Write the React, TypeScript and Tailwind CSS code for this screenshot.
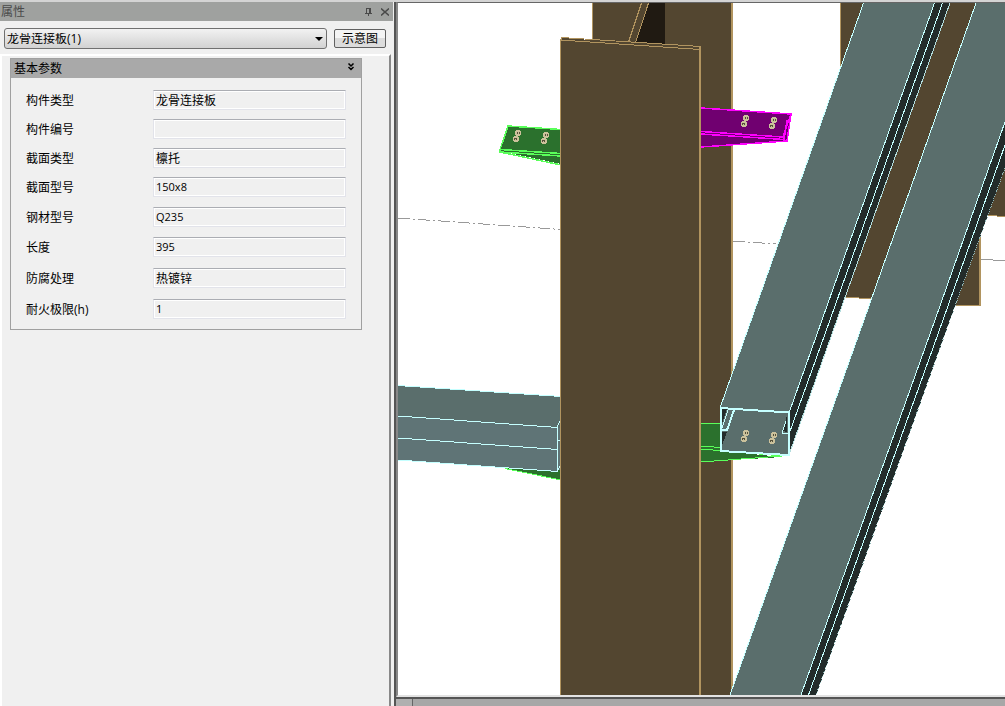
import { useState } from "react";

const fields = [
  { id: "kind", label: "构件类型", value: "龙骨连接板" },
  { id: "number", label: "构件编号", value: "" },
  { id: "section", label: "截面类型", value: "檩托" },
  { id: "sectionModel", label: "截面型号", value: "150x8" },
  { id: "steel", label: "钢材型号", value: "Q235" },
  { id: "length", label: "长度", value: "395" },
  { id: "coating", label: "防腐处理", value: "热镀锌" },
  { id: "fire", label: "耐火极限(h)", value: "1" },
];

// pairs of bolts on the connection plates
const bolts = [
  [517, 136], [545, 138], [745, 121], [773, 123], [745, 436], [773, 438],
];

function TitleBar() {
  return (
    <div className="flex h-[19px] items-center bg-[#9fa19f] pr-1 text-[#4a4a4a]">
      <span className="flex-1 pl-px text-xs leading-none">属性</span>
      <button aria-label="固定" className="mr-2 h-2 w-2">
        <svg viewBox="0 0 8 8" className="h-2 w-2" fill="none" stroke="currentColor" shapeRendering="crispEdges">
          <path d="M1.5 5V.5H5.5V5M4.5 0V5M0 5.5H7M3.5 6V8" />
        </svg>
      </button>
      <button aria-label="关闭" className="h-2 w-2">
        <svg viewBox="0 0 8 8" className="h-2 w-2" stroke="currentColor" strokeWidth="1.5">
          <path d="M0 .5L8 7.5M8 .5L0 7.5" />
        </svg>
      </button>
    </div>
  );
}

function Properties() {
  const [open, setOpen] = useState(true);

  return (
    <fieldset className="min-w-0 border border-[#a0a0a0]">
      <div className="flex h-[19px] items-center bg-[#a9a9a9] pl-[3px] pr-[6px]">
        <h2 className="flex-1 pt-px text-xs leading-4">基本参数</h2>
        <button aria-label="折叠" className="-mt-1 h-2 w-2" onClick={() => setOpen(!open)}>
          <svg viewBox="0 0 7 8" className="h-2 w-2" fill="none" stroke="#000" strokeWidth="1.5">
            <path d="M1 .5L3.5 3L6 .5M1 4L3.5 6.5L6 4" />
          </svg>
        </button>
      </div>
      {open && (
        <div className="grid grid-rows-[29px_29px_29px_30px_30px_31px_31px_20px] pb-[10px] pl-[15px] pr-[15px] pt-3">
          {fields.map((f) => (
            <div key={f.id} className="flex items-start">
              <label htmlFor={f.id} className="w-[127px] text-xs leading-[22px]">{f.label}</label>
              <input
                id={f.id}
                readOnly
                defaultValue={f.value}
                className={`h-5 min-w-0 flex-1 border border-[#e2e3ea] border-t-[#abadb3] bg-[#f0f0f0] px-[2px] shadow-[inset_0_0_0_1px_#fff] outline-none ${/^[\x00-\x7f]*$/.test(f.value) ? "pb-[2px] text-[11px]" : "text-xs"}`}
              />
            </div>
          ))}
        </div>
      )}
    </fieldset>
  );
}

function Bolt({ x, y }: { x: number; y: number }) {
  return (
    <g transform={`translate(${x} ${y})`} shapeRendering="crispEdges">
      <path d="M-1-6h4v1h1v4h-1v1h-4v-1h-1v-4h1zM-3 0h4v1h1v4h-1v1h-4v-1h-1v-4h1z" fill="#cbc19b" />
      <path d="M.5-4v2M2.500-4v2M-2.500 2v2M-.5 2v2M-2 2.500h2" stroke="#555039" />
    </g>
  );
}

function Scene() {
  return (
    <svg
      role="img"
      aria-label="三维视图"
      viewBox="398 3 607 692"
      preserveAspectRatio="xMinYMin slice"
      className="h-full w-full"
      shapeRendering="crispEdges"
      fill="none"
    >
      {/* axis line */}
      <path d="M398 218L561 229.500M733 241L776 244" stroke="#999" strokeDasharray="12 3 2 3" />

      {/* columns at the back right */}
      <path d="M841 3H981V306L956 305L930 299H872L841 297Z" fill="#534630" />
      <path d="M981 3H1005V216L981 215Z" fill="#534630" />
      <path d="M840.500 3V68M845 297.500L872 298.500M956 305L981 306M988 215.500L1005 216.500" stroke="#b1945f" />
      <path d="M980 236V306" stroke="#b1945f" strokeWidth="2" />
      <path d="M981 259.500L1005 260.500" stroke="#999" />

      {/* rear column */}
      <path d="M592 3H732V695H592Z" fill="#534630" />
      <path d="M649 3H665V47L635 43Z" fill="#201a12" />
      <path d="M592.500 3V40M641.500 3L628.500 42M648.500 3L635.500 43" stroke="#b1945f" />
      <path d="M732 3V695" stroke="#b1945f" strokeWidth="2" />

      {/* second rafter */}
      <path d="M976 3H1005V122L801 695H730L864 320Z" fill="#5a6e6c" />
      <path d="M1005 122V168L950 320L816 695H801L935 320Z" fill="#232c2b" />
      <path d="M976 3L864 320L730 695M1005 122L935 320L801 695M1005 145L943 320L808.500 695" stroke="#c5ffff" />
      <path d="M1005 168L950 320L816 695" stroke="#8fb5b5" strokeDasharray="1 1" />

      {/* brackets */}
      <path d="M508 126L561 130V164L500 151Z" fill="#2b712d" />
      <path d="M561 129.500L508 126L500 149.500L561 153.500M500 149V152L561 156M500 152L561 165" stroke="#5aff5a" strokeWidth="1.500" />
      <path d="M701 108L791 114L787 141L701 147Z" fill="#700070" />
      <path d="M701 108L791 114L787 141L701 147M701 131.500L783 137L791 114M701 134L784 139.500L787 120" stroke="#ff00ff" strokeWidth="1.500" />
      <path d="M505 468L561 470V480Z" fill="#2b712d" />
      <path d="M505 468.500L561 480" stroke="#5aff5a" />
      <path d="M701 423L722 424V451L782 457L701 462Z" fill="#2b712d" />
      <path d="M701 423L720 424M701 446L720 447.500M701 449L782 456L701 462" stroke="#5aff5a" />

      {/* left girt */}
      <path d="M398 386L561 397V428H557V472L398 460Z" fill="#5f7476" />
      <path d="M398 386L561 397V428H557L398 416Z" fill="#5a6e6c" />
      <path d="M557 428H561V470H557Z" fill="#5f7476" />
      <path d="M398 385.500L561 396.500M398 416L557.500 427.500M398 438L557.500 449.500M398 460L557.500 471.500V426L560 421M558 440H561M558 470L561 464" stroke="#c5ffff" />

      {/* front column */}
      <path d="M561 38L701 47V695H561Z" fill="#534630" />
      <path d="M560.500 695V40L700 49.500M561 37.500L701 46.500M561 37.500V41" stroke="#b1945f" />
      <path d="M700 47V695" stroke="#b1945f" strokeWidth="2" />

      {/* first rafter with open end */}
      <path d="M863 3H935L789 413L720 408Z" fill="#5a6e6c" />
      <path d="M935 3H950L837 320L789 455V413Z" fill="#232c2b" />
      <path d="M863.500 3L720 408M934.500 3L822 320L789 413M942.500 3L830 320L789 434" stroke="#c5ffff" />
      <path d="M950 3L837 320L789 455" stroke="#b3dddd" />
      <path d="M720 408L788 413V455L720 451Z" fill="#5a6e6c" />
      <path d="M721 409H727L721 427ZM721 432H727L721 448ZM787 415V432L783 431Z" fill="#232c2b" />
      <path d="M720.500 408L788.500 412.500V455L720.500 451ZM720 430H727L734 410" stroke="#c5ffff" strokeWidth="2" />
      <path d="M728 410L722 428M786 421L782 433L789 434" stroke="#c5ffff" />
      {bolts.map(([x, y]) => <Bolt key={`${x}-${y}`} x={x} y={y} />)}
    </svg>
  );
}

export default function App() {
  return (
    <div className="flex h-screen overflow-hidden border-t-2 border-[#d4d4d4] bg-[#f0f0f0] font-['Open_Sans','Noto_Sans_CJK_SC',sans-serif] text-xs text-black">
      <aside className="flex w-[394px] shrink-0 flex-col">
        <div className="pr-px">
          <TitleBar />
        </div>
        <div className="flex items-center gap-[7px] pb-[5px] pl-1 pr-2 pt-[7px]">
          <div className="grid flex-1 items-center">
            <select
              aria-label="构件"
              className="col-start-1 row-start-1 h-[21px] appearance-none rounded-[3px] border border-[#707070] bg-linear-to-b from-[#f2f2f2] to-[#d2d2d2] pl-[2px] text-xs leading-none"
            >
              <option>龙骨连接板(1)</option>
            </select>
            <svg viewBox="0 0 8 4" className="pointer-events-none col-start-1 row-start-1 mr-1 h-1 w-2 justify-self-end">
              <path d="M0 0H8L4 4Z" />
            </svg>
          </div>
          <button className="h-[19px] w-[52px] rounded-[2px] border border-[#606060] bg-linear-to-b from-[#f4f4f4] from-50% to-[#dcdcdc] to-50% text-xs leading-none">示意图</button>
        </div>
        <div className="mr-[3px] flex-1 border-l-2 border-r-2 border-t-2 border-l-white border-r-[#888] border-t-white pl-2 pr-[27px] pt-[2px]">
          <Properties />
        </div>
      </aside>

      <main className="flex min-w-0 flex-1 flex-col border-l-2 border-[#555]">
        <div className="min-h-0 flex-1 border-l-2 border-t border-b-2 border-l-[#888] border-t-[#666] border-b-[#e3e3e3] bg-white">
          <Scene />
        </div>
        <footer className="flex h-[9px] shrink-0 border-t-2 border-[#555] bg-[#a7a7a7]">
          <div className="w-[17px] border-r border-[#666] bg-[#b0b0b0]" />
        </footer>
      </main>
    </div>
  );
}
